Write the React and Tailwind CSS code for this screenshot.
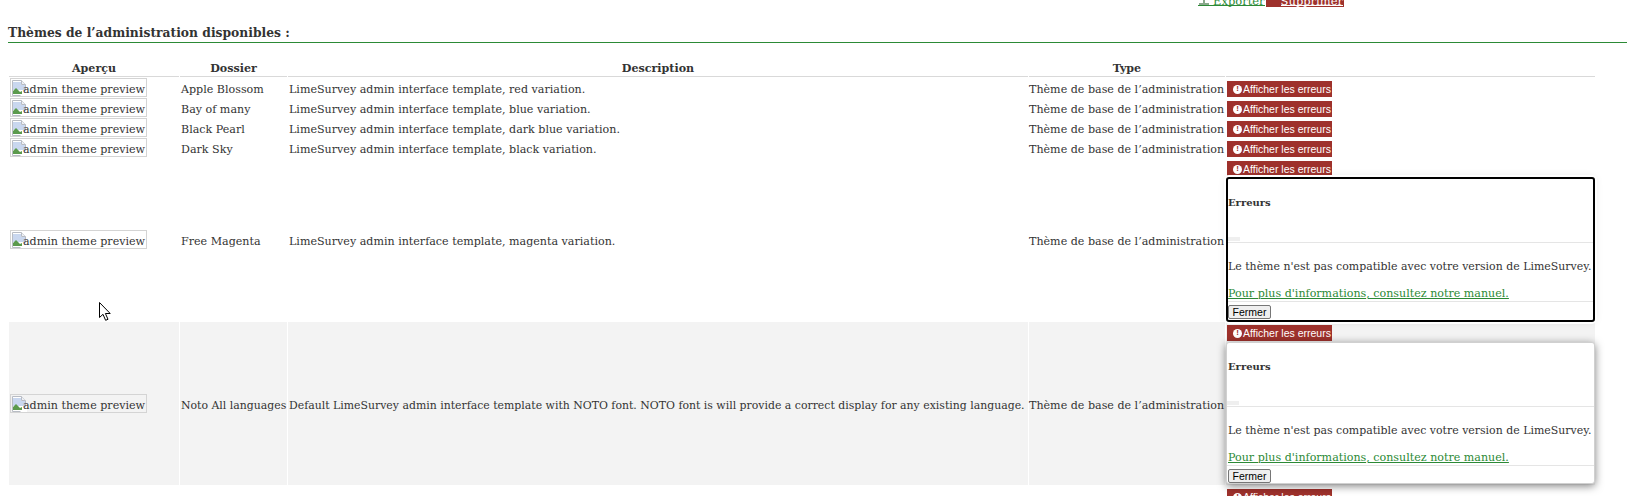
import React from 'react';

const themes = [
  { name: 'Apple Blossom', desc: 'LimeSurvey admin interface template, red variation.' },
  { name: 'Bay of many', desc: 'LimeSurvey admin interface template, blue variation.' },
  { name: 'Black Pearl', desc: 'LimeSurvey admin interface template, dark blue variation.' },
  { name: 'Dark Sky', desc: 'LimeSurvey admin interface template, black variation.' },
  { name: 'Free Magenta', desc: 'LimeSurvey admin interface template, magenta variation.', dialog: 'focus' },
  {
    name: 'Noto All languages',
    desc: 'Default LimeSurvey admin interface template with NOTO font. NOTO font is will provide a correct display for any existing language.',
    dialog: 'shadow',
    grey: true,
  },
  { name: 'Sea Green', desc: 'LimeSurvey admin interface template, green variation.', dialog: 'shadow' },
];

const BrokenImage = () => (
  <svg width="16" height="16" viewBox="0 0 16 16" className="shrink-0">
    <path d="M1.5 .5h9l4 4v11h-13z" fill="#fff" stroke="#b8bcc4" />
    <path d="M2 2h8v3h4v5H2z" fill="#c9d7ef" />
    <path d="M2 14v-3l3-3 4 4 2-1v3z" fill="#5b9a4c" />
    <path d="M10.5 .5v4h4" fill="#eef0f4" stroke="#b8bcc4" />
    <path d="M9 16l7-7v7z" fill="#fff" />
  </svg>
);

const PreviewImage = () => (
  <span className="flex items-center h-[19px] w-[137px] border border-[#d4d4d4] overflow-hidden whitespace-nowrap">
    <BrokenImage />
    <span className="-ml-[4px] h-full pt-[4px] leading-[13px]">admin theme preview</span>
  </span>
);

const ErrorsButton = () => (
  <button className="flex items-center h-4 w-[105px] ml-[1px] pl-[6px] bg-[#9e312c] text-white text-[10.5px] leading-none whitespace-nowrap font-['Liberation_Sans',Arial,sans-serif]">
    <span className="flex items-center justify-center w-[9px] h-[9px] mr-[1px] rounded-full bg-white text-[#9e312c] text-[8px] font-bold">!</span>
    Afficher les erreurs
  </button>
);

const ErrorsDialog = ({ variant }) => {
  const focused = variant === 'focus';
  const pad = focused ? 'pl-0' : 'pl-[1px]';
  return (
    <div
      className={`relative flex flex-col w-[369px] bg-white rounded-[3px] whitespace-nowrap ${
        focused
          ? 'h-[145px] -mb-[1px] border-2 border-black shadow-[0_0_0_2px_#fff,0_0_8px_rgba(0,0,0,0.1)]'
          : 'h-[142px] mt-[1px] mb-[1px] border border-[#d0d0d0] shadow-[0_2px_8px_rgba(0,0,0,0.5)]'
      }`}
    >
      <div className={`relative h-[64px] shrink-0 border-b border-[#e5e5e5] ${pad}`}>
        <h3 className="pt-[17px] text-[10px] leading-[14px] font-bold">Erreurs</h3>
        <span className="absolute left-0 bottom-[1px] w-3 h-1 bg-[#efefef]" />
      </div>
      <div className={`h-[59px] shrink-0 border-b border-[#e5e5e5] overflow-hidden ${pad}`}>
        <p className="mt-[15px] leading-[18px] text-[10.95px]">Le thème n'est pas compatible avec votre version de LimeSurvey.</p>
        <a className="block mt-[10px] leading-[16px] text-[#2c8a36] underline">Pour plus d'informations, consultez notre manuel.</a>
      </div>
      <div className={`flex-1 pt-[3px] ${pad}`}>
        <button className="block w-[43px] h-[14px] border border-[#767676] rounded-[2px] bg-[#efefef] text-[10.5px] leading-none text-black font-['Liberation_Sans',Arial,sans-serif]">
          Fermer
        </button>
      </div>
    </div>
  );
};

const Cursor = () => (
  <svg width="13" height="19" viewBox="0 0 13 19" className="absolute left-[99px] top-[302px]">
    <path d="M.5.5v15l3.5-3.2 2.6 6 2.4-1-2.6-5.8h4.8z" fill="#fff" stroke="#000" />
  </svg>
);

export default function App() {
  return (
    <div className="relative h-[496px] overflow-hidden bg-white text-[11.1px] text-[#333] font-['DejaVu_Serif','Liberation_Serif',serif]">
      {/* barre d'actions, coupée par le haut de la capture */}
      <div className="flex justify-end h-[7px] pr-[291px] text-[11.5px]">
        <a className="-mt-[8px] h-[14px] flex items-end border-b border-[#2c8a36] text-[#2c8a36]">
          <svg width="12" height="14" viewBox="0 0 12 14" className="mr-[3px]">
            <path d="M1 13h10M6 4v9" stroke="#8aa88c" strokeWidth="2" fill="none" />
          </svg>
          <span className="leading-[8px]">Exporter</span>
        </a>
        <a className="-mt-[8px] h-[15px] flex items-end ml-[1px] px-[1px] bg-[#9e312c] text-white">
          <svg width="9" height="12" viewBox="0 0 9 12" className="mb-[1px] ml-[1px] mr-[4px]">
            <path d="M1 0h7v6H6V3H5v3H4V3H3v3H1z" fill="#fff" />
          </svg>
          <span className="border-b border-white leading-[8px] mb-[1px]">Supprimer</span>
        </a>
      </div>

      <h2 className="mx-2 mt-[16px] h-[20px] border-b border-[#2c8a36] text-[12.3px] leading-[20px] font-bold">
        Thèmes de l’administration disponibles :
      </h2>

      <table className="mt-[13px] ml-[8px] w-[1588px] table-fixed border-separate border-spacing-x-[1px] border-spacing-y-[1px] leading-[14px]">
        <colgroup>
          <col className="w-[170px]" />
          <col className="w-[107px]" />
          <col className="w-[740px]" />
          <col className="w-[196px]" />
          <col />
        </colgroup>
        <thead>
          <tr className="h-[20px] text-center font-bold">
            <th className="pt-[5px] border-b border-[#d9d9d9]">Aperçu</th>
            <th className="pt-[5px] border-b border-[#d9d9d9]">Dossier</th>
            <th className="pt-[5px] border-b border-[#d9d9d9]">Description</th>
            <th className="pt-[5px] border-b border-[#d9d9d9]">Type</th>
            <th className="pt-[5px] border-b border-[#d9d9d9]" />
          </tr>
        </thead>
        <tbody>
          {themes.map((t) => (
            <tr key={t.name} className={t.grey ? 'bg-[#f3f3f3]' : ''}>
              <td className="pl-[1px]"><PreviewImage /></td>
              <td className={`pl-[1px] pt-[5px] whitespace-nowrap ${t.grey ? 'text-[10.9px]' : ''}`}>{t.name}</td>
              <td className={`pl-[1px] pt-[5px] whitespace-nowrap ${t.grey ? 'text-[10.9px]' : ''}`}>{t.desc}</td>
              <td className="pt-[5px] whitespace-nowrap">Thème de base de l’administration</td>
              <td className="pt-[3px] align-top">
                <ErrorsButton />
                {t.dialog && <ErrorsDialog variant={t.dialog} />}
              </td>
            </tr>
          ))}
        </tbody>
      </table>

      <Cursor />
    </div>
  );
}
